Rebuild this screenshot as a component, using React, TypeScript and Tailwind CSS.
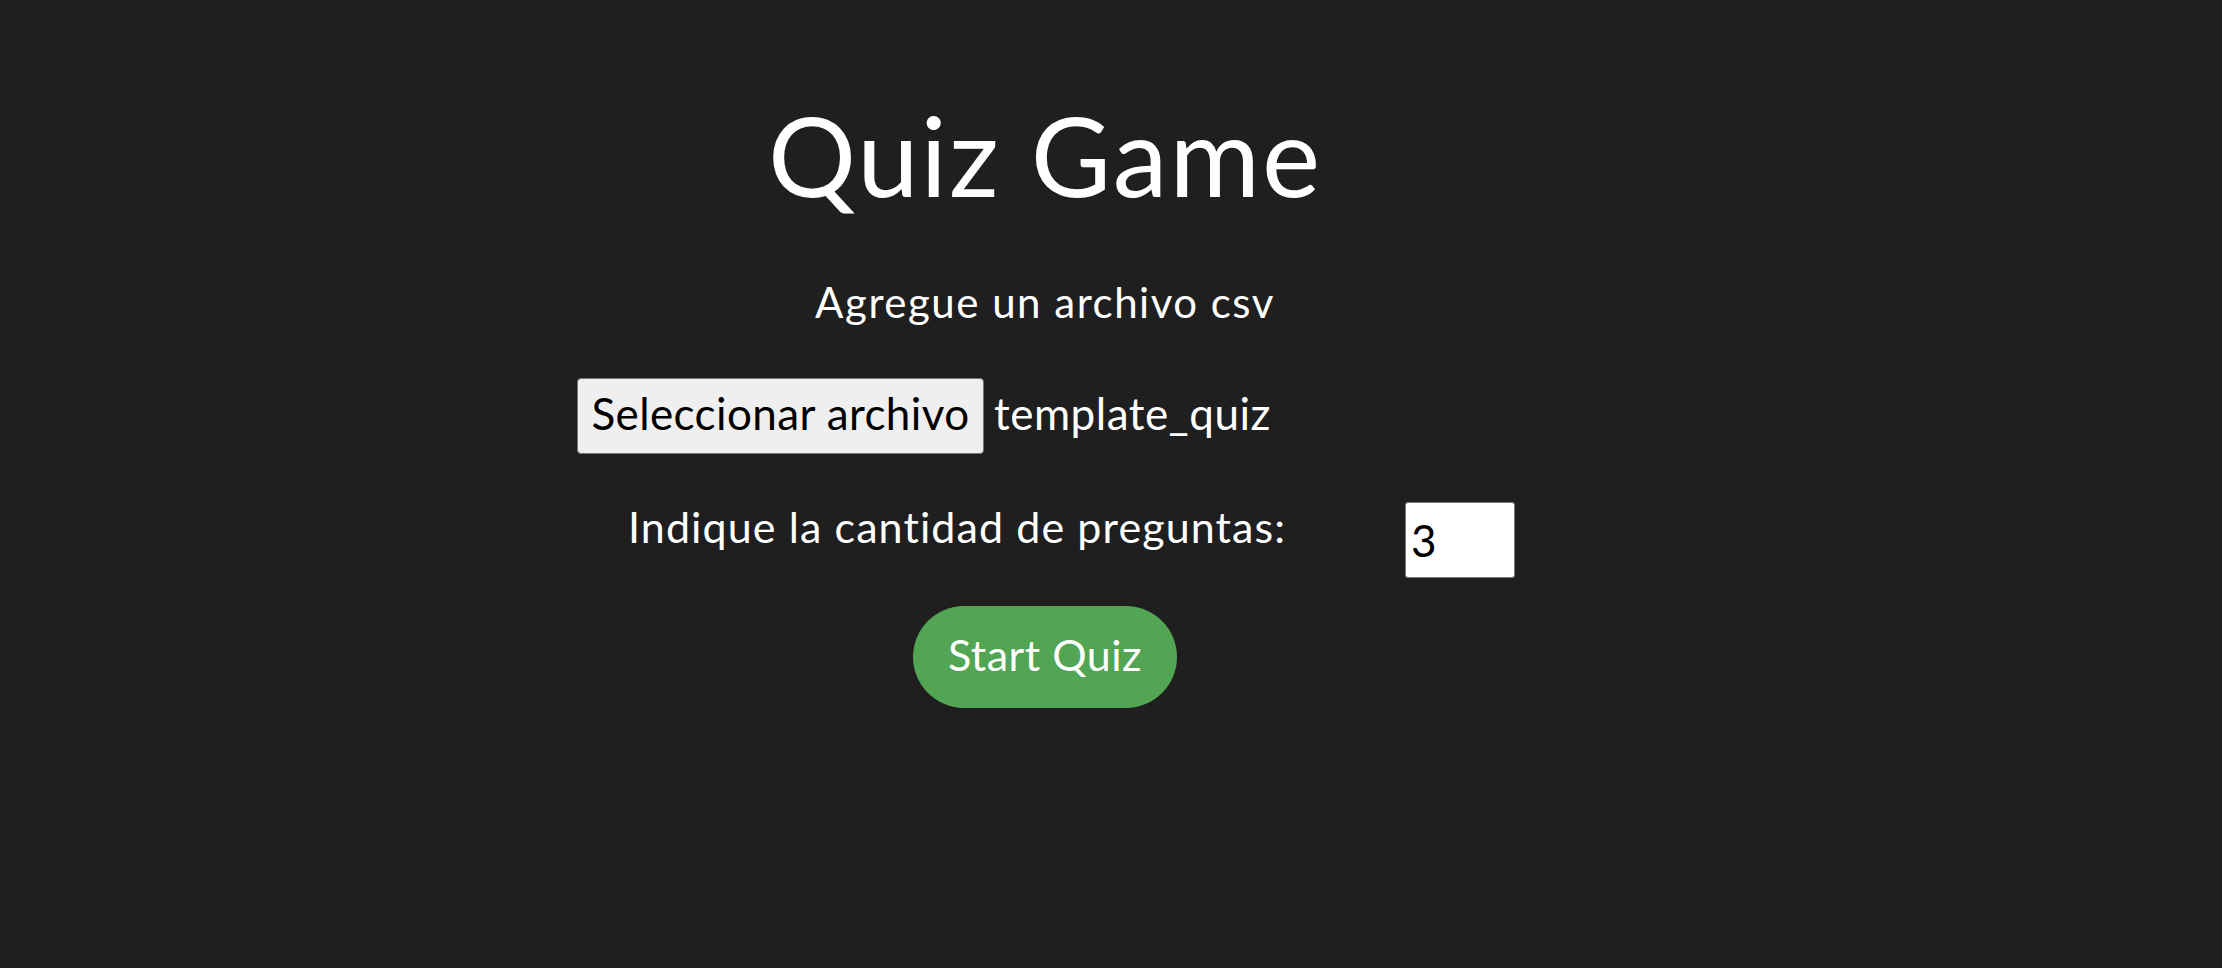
import React from "react";

export default function App() {
  return (
    <div
      className="min-h-[968px] w-full bg-[#1f1f1f] text-white"
      style={{ fontFamily: "Lato, 'Noto Sans', sans-serif" }}
    >
      <div className="ml-[577px] flex w-[936px] flex-col pt-[99px]">
        <h1 className="text-center text-[110px] font-normal leading-[110px] tracking-[2px]">Quiz Game</h1>
        <p className="mt-[72px] text-center text-[42px] leading-[42px] tracking-[1.5px]">
          Agregue un archivo csv
        </p>
        <div className="mt-[55px] flex h-[76px] items-center">
          <button className="h-[76px] w-[407px] shrink-0 whitespace-nowrap rounded-[4px] border border-[#767676] bg-[#efefef] pb-[6px] text-[44px] leading-none tracking-[0.4px] text-black">
            Seleccionar archivo
          </button>
          <span className="ml-[10px] whitespace-nowrap pb-[6px] text-[44px] leading-none tracking-[0.5px]">
            template_quiz
          </span>
        </div>
        <div className="mt-[48px] flex items-start">
          <label className="ml-[51px] mt-[3px] w-[777px] shrink-0 whitespace-nowrap text-[43px] leading-[43px] tracking-[1.1px]">
            Indique la cantidad de preguntas:
          </label>
          <input
            type="number"
            defaultValue={3}
            className="h-[76px] w-[110px] shrink-0 rounded-[3px] border border-[#767676] bg-white px-[5px] text-[44px] text-black outline-none"
          />
        </div>
        <button className="mx-auto mt-[28px] h-[102px] w-[264px] rounded-full bg-[#52a552] pb-[5px] text-[43px] leading-none tracking-[0.5px] text-white">
          Start Quiz
        </button>
      </div>
    </div>
  );
}
